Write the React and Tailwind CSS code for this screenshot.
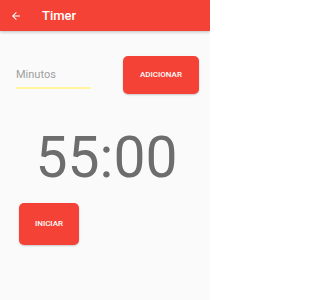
import React from "react";

const App = () => {
  return (
    <div className="w-[210px] h-[300px] bg-[#fafafa] flex flex-col font-['Roboto',sans-serif] overflow-hidden">
      {/* Toolbar */}
      <div className="h-[31px] bg-[#f44336] flex items-center shadow-[0_1px_3px_rgba(0,0,0,0.25)] shrink-0">
        <svg className="ml-[10px] w-[12px] h-[12px]" viewBox="0 0 24 24" fill="white">
          <path d="M20 11H7.83l5.59-5.59L12 4l-8 8 8 8 1.41-1.41L7.83 13H20v-2z" />
        </svg>
        <span className="ml-[20px] text-white text-[13px] font-medium">Timer</span>
      </div>

      {/* Input row */}
      <div className="flex items-start justify-between pl-[16px] pr-[11px] pt-[25px]">
        <div className="w-[75px] mt-[12px] flex flex-col">
          <span className="text-[11px] leading-[14px] text-[#9e9e9e]">Minutos</span>
          <div className="mt-[5px] h-[2px] bg-[#fff59d]" />
        </div>
        <button className="w-[76px] h-[38px] rounded-[5px] bg-[#f44336] text-white text-[8px] font-medium shadow-[0_1px_2px_rgba(0,0,0,0.2)]">
          ADICIONAR
        </button>
      </div>

      {/* Time */}
      <div className="flex justify-center mt-[34px] pl-[3px]">
        <span className="text-[57px] leading-[60px] text-[#6d6d6d]">55:00</span>
      </div>

      {/* Start */}
      <div className="pl-[19px] mt-[15px]">
        <button className="w-[60px] h-[42px] rounded-[5px] bg-[#f44336] text-white text-[8px] font-medium shadow-[0_1px_2px_rgba(0,0,0,0.2)]">
          INICIAR
        </button>
      </div>
    </div>
  );
};

export default App;
